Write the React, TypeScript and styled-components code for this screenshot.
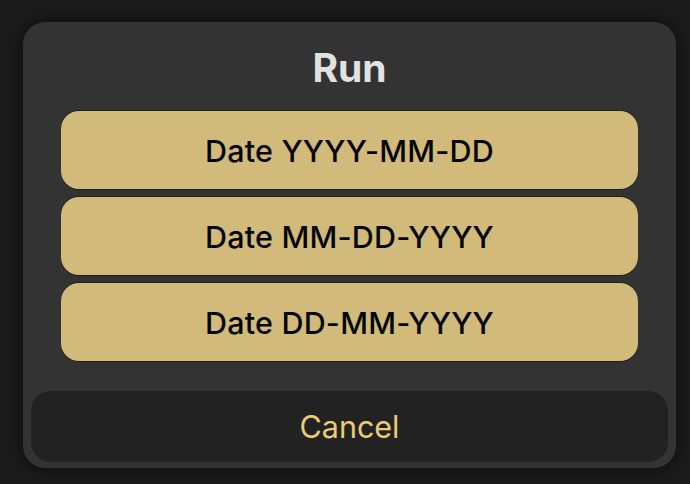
import React from "react";
import styled, { createGlobalStyle } from "styled-components";

const Global = createGlobalStyle`
  html, body { margin: 0; padding: 0; background: #1b1b1b; }
  body { font-family: Inter, "Noto Sans", sans-serif; -webkit-font-smoothing: antialiased; }
`;

const Page = styled.div`
  width: 690px;
  height: 484px;
  box-sizing: border-box;
  padding: 22px 14px 16px 23px;
  display: flex;
`;

const Sheet = styled.div`
  flex: 1;
  background: #333333;
  border-radius: 22px;
  box-shadow: 0 0 12px 4px rgba(0, 0, 0, 0.35);
  padding: 0 8px 6px 8px;
  display: flex;
  flex-direction: column;
`;

const Title = styled.div`
  height: 90px;
  display: flex;
  align-items: center;
  justify-content: center;
  color: #e2e2e2;
  font-size: 39px;
  font-weight: 700;
  padding-top: 2px;
  box-sizing: border-box;
`;

const Options = styled.div`
  display: flex;
  flex-direction: column;
  gap: 8px;
  padding: 0 30px;
`;

const Option = styled.button`
  height: 78px;
  border: none;
  border-radius: 18px;
  background: #d1ba7a;
  box-shadow: 0 -1px 0 rgba(0, 0, 0, 0.35), 0 1px 0 rgba(0, 0, 0, 0.4);
  color: #050505;
  font-family: Inter, "Noto Sans", sans-serif;
  font-size: 30.5px;
  font-weight: 500;
  letter-spacing: 0.2px;
  display: flex;
  align-items: center;
  justify-content: center;
  padding: 0;
`;

const CancelButton = styled.button`
  margin-top: 30px;
  height: 71px;
  border: none;
  border-radius: 20px;
  background: #222222;
  color: #eccb77;
  font-family: Inter, "Noto Sans", sans-serif;
  font-size: 30.5px;
  font-weight: 400;
  display: flex;
  align-items: center;
  justify-content: center;
  padding: 0;
`;

const options = ["Date YYYY-MM-DD", "Date MM-DD-YYYY", "Date DD-MM-YYYY"];

export default function App() {
  return (
    <>
      <Global />
      <Page>
        <Sheet>
          <Title>Run</Title>
          <Options>
            {options.map((o) => (
              <Option key={o}>{o}</Option>
            ))}
          </Options>
          <CancelButton>Cancel</CancelButton>
        </Sheet>
      </Page>
    </>
  );
}
